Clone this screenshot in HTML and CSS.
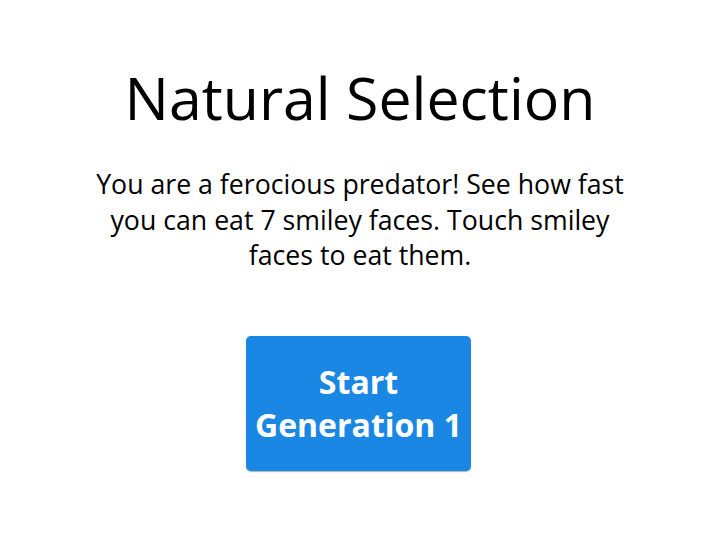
FILE: index.html
```html
<!DOCTYPE html>
<html>
<head>
<meta charset="utf-8">
<link rel="stylesheet" href="styles.css">
</head>
<body>
<main class="screen">
  <h1 class="title">Natural Selection</h1>
  <p class="intro">You are a ferocious predator! See how fast you can eat 7 smiley faces. Touch smiley faces to eat them.</p>
  <button class="start">Start<br>Generation 1</button>
</main>
</body>
</html>
```
FILE: styles.css
```css
html, body {
  margin: 0;
  padding: 0;
  background: #ffffff;
}
.screen {
  width: 720px;
  height: 540px;
  display: flex;
  flex-direction: column;
  align-items: center;
  font-family: "Open Sans", sans-serif;
  color: #000;
}
.title {
  margin: 57px 0 0;
  font-size: 59px;
  font-weight: 400;
  line-height: 80px;
}
.intro {
  margin: 29px 0 0;
  width: 545px;
  font-size: 26.7px;
  line-height: 35.5px;
  text-align: center;
}
.start {
  margin: 63px 3px 0 0;
  width: 225px;
  height: 135px;
  border: none;
  border-radius: 5px;
  background: #1b87e5;
  color: #fff;
  font-family: "Open Sans", sans-serif;
  font-weight: 700;
  font-size: 32px;
  line-height: 43px;
  padding: 0;
  box-shadow: 0 1px 1px rgba(0,0,0,0.3);
}
```
